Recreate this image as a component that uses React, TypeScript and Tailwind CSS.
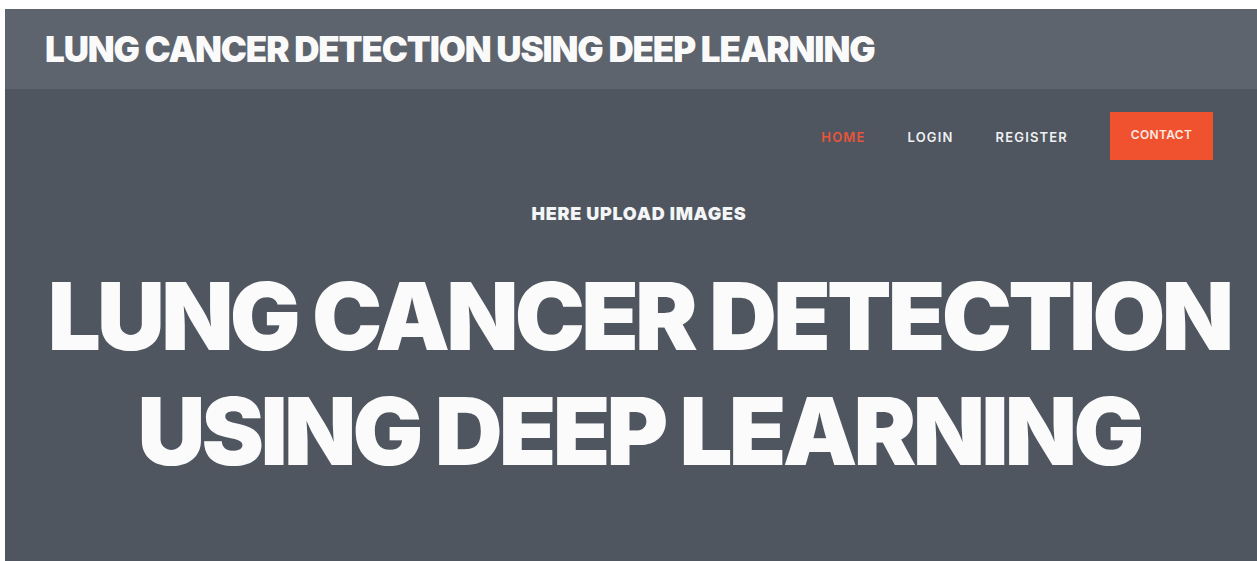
const navLinks = [
  { label: "HOME", active: true },
  { label: "LOGIN", active: false },
  { label: "REGISTER", active: false },
];

function NavBar() {
  return (
    <nav className="flex items-center justify-end pt-[23px] pr-[44px]">
      <ul className="flex items-center">
        {navLinks.map((link) => (
          <li key={link.label} className="mr-[42px]">
            <a
              href="#"
              className={
                "text-[13px] font-semibold tracking-[0.09em] " +
                (link.active ? "text-[#e9553a]" : "text-[#eef0f2]")
              }
            >
              {link.label}
            </a>
          </li>
        ))}
        <li>
          <a
            href="#"
            className="flex h-[48px] w-[103px] items-center justify-center bg-[#f0522f] pb-[2px] text-[12px] font-semibold tracking-[0.03em] text-[#fbe9e2]"
          >
            CONTACT
          </a>
        </li>
      </ul>
    </nav>
  );
}

export default function App() {
  return (
    <div
      className="min-h-screen bg-white pl-[5px] pt-[9px]"
      style={{ fontFamily: "Inter, 'Noto Sans', sans-serif" }}
    >
      <div className="min-h-[552px] bg-[#4f5660]">
        <header className="flex h-[80px] items-center bg-[#5e646d] pl-[40px]">
          <h1 className="text-[35px] font-black leading-none tracking-[-0.033em] text-[#fafafa]">
            LUNG CANCER DETECTION USING DEEP LEARNING
          </h1>
        </header>
        <NavBar />
        <section className="flex flex-col items-center pt-[40px] pl-[16px] text-center">
          <p className="text-[18px] font-black tracking-[0.04em] text-[#f4f5f6]">
            HERE UPLOAD IMAGES
          </p>
          <h2 className="mt-[32px] text-[94px] font-black leading-[115px] tracking-[-0.04em] text-[#fbfbfb]">
            LUNG CANCER DETECTION
            <br />
            USING DEEP LEARNING
          </h2>
        </section>
      </div>
    </div>
  );
}
